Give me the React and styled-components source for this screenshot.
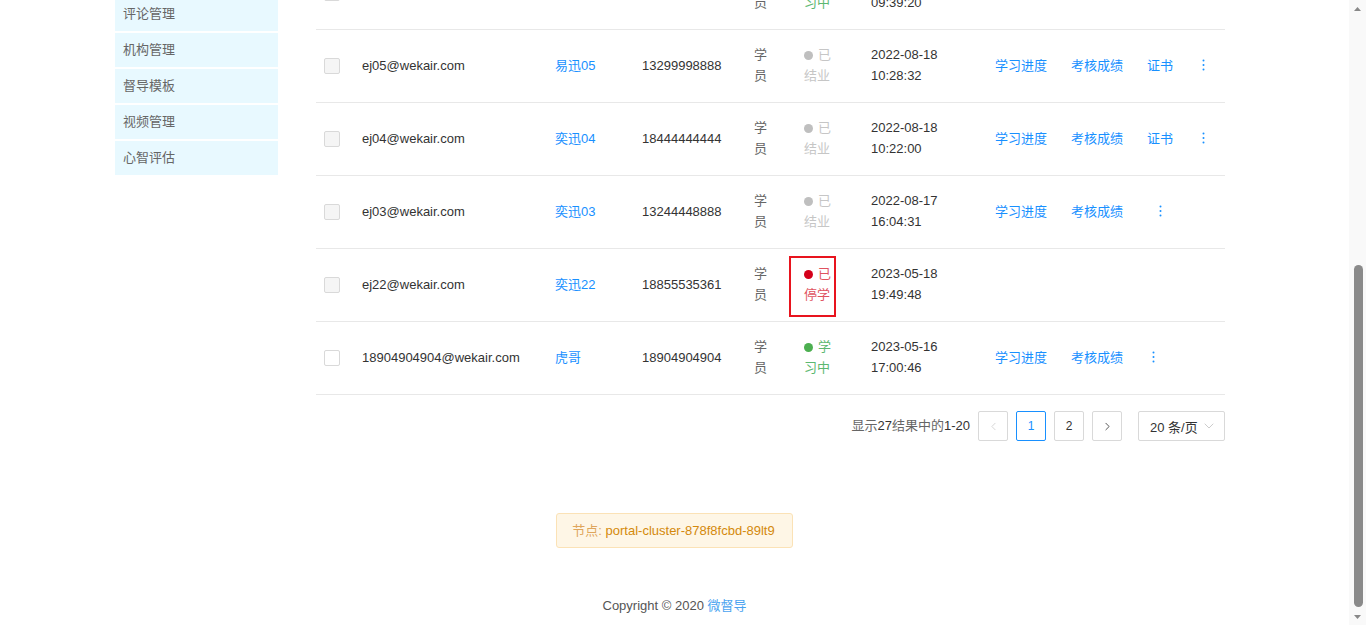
import { useLayoutEffect } from "react";
import styled, { createGlobalStyle } from "styled-components";
import { ChevronLeft, ChevronRight, ChevronDown } from "lucide-react";

const GlobalStyle = createGlobalStyle`
  html, body {
    margin: 0;
    padding: 0;
    background: #fff;
  }
  body {
    padding-right: 17px;
    font-family: "Liberation Sans", "Noto Sans CJK SC", sans-serif;
    font-size: 13px;
    color: #333;
  }
`;

// window scrollbar as it appears in the screenshot (page scrolled to bottom)
const ScrollTrack = styled.div`
  position: fixed;
  top: 0;
  right: 0;
  width: 17px;
  height: 100vh;
  background: #f9f9f9;
  display: flex;
  flex-direction: column;
`;

const ScrollArea = styled.div`
  flex: 1;
  display: flex;
  flex-direction: column;
  justify-content: flex-end;
  align-items: center;
  padding: 0 0 1px 1px;
`;

const ScrollThumb = styled.div`
  width: 9px;
  height: 342px;
  border-radius: 5px;
  background: #8a8a8a;
`;

const Header = styled.header`
  height: 60px;
  box-sizing: border-box;
  border-bottom: 1px solid #eee;
  display: flex;
  align-items: center;
  padding: 0 115px;
  gap: 32px;
`;

const Logo = styled.div`
  font-size: 20px;
  color: #1890ff;
`;

const Container = styled.div`
  width: 1119px;
  margin: 32px auto 0;
  display: flex;
  align-items: flex-start;
  gap: 38px;
`;

const Sidebar = styled.ul`
  width: 163px;
  flex: none;
  margin: 0;
  padding: 0;
  list-style: none;
`;

const SideItem = styled.li`
  height: 34px;
  line-height: 34px;
  margin-bottom: 2px;
  padding-left: 8px;
  background: ${(props) => (props.$active ? "#bae7ff" : "#e8f9ff")};
  color: #666;
  font-size: 13px;
`;

const Main = styled.main`
  width: 909px;
  flex: none;
`;

const Toolbar = styled.div`
  height: 120px;
  display: flex;
  flex-direction: column;
  gap: 20px;
  padding-top: 10px;
  box-sizing: border-box;
`;

const Title = styled.h2`
  margin: 0;
  font-size: 18px;
  font-weight: normal;
  color: #333;
`;

const SearchInput = styled.div`
  width: 240px;
  height: 30px;
  border: 1px solid #d9d9d9;
  border-radius: 2px;
  color: #bbb;
  line-height: 30px;
  padding-left: 10px;
`;

const Row = styled.div`
  display: grid;
  grid-template-columns: 46px 193px 87px 112px 50px 67px 124px 230px;
  align-items: center;
  height: ${(props) => (props.$head ? "54px" : "73px")};
  box-sizing: border-box;
  padding-bottom: 2px;
  border-bottom: 1px solid #e8e8e8;
  background: ${(props) => (props.$head ? "#fafafa" : "#fff")};
  color: ${(props) => (props.$head ? "#666" : "#333")};
  line-height: 21px;
`;

const CheckCell = styled.div`
  padding-left: 8px;
  padding-top: 1px;
`;

const Checkbox = styled.span`
  display: block;
  width: 16px;
  height: 16px;
  box-sizing: border-box;
  border: 1px solid #d9d9d9;
  border-radius: 2px;
  background: ${(props) => (props.$disabled ? "#f5f5f5" : "#fff")};
`;

const NameLink = styled.a`
  color: #1890ff;
  text-decoration: none;
`;

const Role = styled.div`
  width: 16px;
  color: #666;
`;

const statusColors = {
  done: { dot: "#bfbfbf", text: "#c6c6c6" },
  stopped: { dot: "#d4001a", text: "#e0535f" },
  learning: { dot: "#4caf50", text: "#5cb870" },
};

const Status = styled.div`
  position: relative;
  width: 32px;
  color: ${(props) => statusColors[props.$type].text};

  ${(props) =>
    props.$marked &&
    `
    &::after {
      content: "";
      position: absolute;
      top: -7px;
      bottom: -12px;
      left: -15px;
      right: 0;
      border: 2px solid #e8141e;
    }
  `}
`;

const Dot = styled.span`
  display: inline-block;
  width: 9px;
  height: 9px;
  border-radius: 50%;
  margin-right: 5px;
  vertical-align: -1px;
  background: ${(props) => statusColors[props.$type].dot};
`;

const Time = styled.div`
  display: flex;
  flex-direction: column;
`;

const Actions = styled.div`
  display: flex;
  align-items: center;
  gap: 24px;
`;

const ActionLink = styled.a`
  color: #1890ff;
  text-decoration: none;
`;

const More = styled.svg`
  margin-left: ${(props) => props.$shift}px;
  display: block;
`;

const Pager = styled.div`
  display: flex;
  justify-content: flex-end;
  align-items: center;
  margin-top: 16px;
  gap: 8px;
`;

const PagerInfo = styled.span`
  font-size: 13px;
  color: #666;
  margin-top: -4px;

  b {
    font-weight: normal;
    color: #333;
  }
`;

const PageBtn = styled.span`
  width: 30px;
  height: 30px;
  box-sizing: border-box;
  border: 1px solid ${(props) => (props.$active ? "#1890ff" : "#d9d9d9")};
  border-radius: 2px;
  display: flex;
  align-items: center;
  justify-content: center;
  font-size: 12px;
  color: ${(props) => (props.$active ? "#1890ff" : props.$muted ? "#ccc" : "#333")};
`;

const SizeSelect = styled.div`
  margin-left: 8px;
  width: 87px;
  height: 30px;
  box-sizing: border-box;
  border: 1px solid #d9d9d9;
  border-radius: 2px;
  display: flex;
  align-items: center;
  justify-content: space-between;
  padding: 0 7px 0 11px;
  font-size: 13px;
  color: #333;

  svg {
    color: #bfbfbf;
  }
`;

const Footer = styled.footer`
  display: flex;
  flex-direction: column;
  align-items: center;
  padding-bottom: 9px;
`;

const NodeBox = styled.div`
  margin-top: 72px;
  height: 35px;
  box-sizing: border-box;
  line-height: 33px;
  padding: 0 17px 0 15px;
  background: #fef6e6;
  border: 1px solid #fbe2b6;
  border-radius: 3px;
  color: #d4890c;

  span {
    color: #dfa65c;
  }
`;

const Copyright = styled.div`
  margin-top: 48px;
  line-height: 20px;
  color: #555;

  a {
    color: #4aa3f0;
    text-decoration: none;
  }
`;

const menu = [
  "首页",
  "学员管理",
  "课程管理",
  "班级管理",
  "考试管理",
  "证书管理",
  "题库管理",
  "资讯管理",
  "活动管理",
  "订单管理",
  "评论管理",
  "机构管理",
  "督导模板",
  "视频管理",
  "心智评估",
];

const students = [
  {
    email: "ej08@wekair.com",
    name: "易迅08",
    phone: "13211112222",
    status: "learning",
    label: "学习中",
    date: "2022-08-19",
    time: "09:45:13",
    disabled: true,
    actions: ["学习进度", "考核成绩"],
    shift: 12,
  },
  {
    email: "ej07@wekair.com",
    name: "易迅07",
    phone: "13288886666",
    status: "learning",
    label: "学习中",
    date: "2022-08-19",
    time: "09:41:02",
    disabled: true,
    actions: ["学习进度", "考核成绩"],
    shift: 12,
  },
  {
    email: "ej06@wekair.com",
    name: "易迅06",
    phone: "13277775555",
    status: "learning",
    label: "学习中",
    date: "2022-08-19",
    time: "09:39:20",
    disabled: true,
    actions: [],
  },
  {
    email: "ej05@wekair.com",
    name: "易迅05",
    phone: "13299998888",
    status: "done",
    label: "已结业",
    date: "2022-08-18",
    time: "10:28:32",
    disabled: true,
    actions: ["学习进度", "考核成绩", "证书"],
    shift: 5,
  },
  {
    email: "ej04@wekair.com",
    name: "奕迅04",
    phone: "18444444444",
    status: "done",
    label: "已结业",
    date: "2022-08-18",
    time: "10:22:00",
    disabled: true,
    actions: ["学习进度", "考核成绩", "证书"],
    shift: 5,
  },
  {
    email: "ej03@wekair.com",
    name: "奕迅03",
    phone: "13244448888",
    status: "done",
    label: "已结业",
    date: "2022-08-17",
    time: "16:04:31",
    disabled: true,
    actions: ["学习进度", "考核成绩"],
    shift: 12,
  },
  {
    email: "ej22@wekair.com",
    name: "奕迅22",
    phone: "18855535361",
    status: "stopped",
    label: "已停学",
    date: "2023-05-18",
    time: "19:49:48",
    disabled: true,
    marked: true,
    actions: [],
  },
  {
    email: "18904904904@wekair.com",
    name: "虎哥",
    phone: "18904904904",
    status: "learning",
    label: "学习中",
    date: "2023-05-16",
    time: "17:00:46",
    disabled: false,
    actions: ["学习进度", "考核成绩"],
    shift: 5,
  },
];

const MoreIcon = ({ shift }) => (
  <More $shift={shift} width="3" height="12" viewBox="0 0 3 12">
    <circle cx="1.5" cy="1.5" r="1" fill="#1890ff" />
    <circle cx="1.5" cy="6" r="1" fill="#1890ff" />
    <circle cx="1.5" cy="10.5" r="1" fill="#1890ff" />
  </More>
);

const ScrollArrow = ({ down }) => (
  <svg width="17" height="17" viewBox="0 0 17 17">
    <polygon
      points={down ? "5,7 12,7 8.5,11" : "5,11 12,11 8.5,7"}
      fill="#888"
    />
  </svg>
);

const StudentRow = ({ item }) => (
  <Row>
    <CheckCell>
      <Checkbox $disabled={item.disabled} />
    </CheckCell>
    <div>{item.email}</div>
    <div>
      <NameLink>{item.name}</NameLink>
    </div>
    <div>{item.phone}</div>
    <Role>学员</Role>
    <div>
      <Status $type={item.status} $marked={item.marked}>
        <Dot $type={item.status} />
        {item.label}
      </Status>
    </div>
    <Time>
      <span>{item.date}</span>
      <span>{item.time}</span>
    </Time>
    <Actions>
      {item.actions.map((action) => (
        <ActionLink key={action}>{action}</ActionLink>
      ))}
      {item.actions.length > 0 && <MoreIcon shift={item.shift} />}
    </Actions>
  </Row>
);

const App = () => {
  // the screenshot shows the page scrolled all the way down
  useLayoutEffect(() => {
    window.scrollTo(0, document.documentElement.scrollHeight);
  }, []);

  return (
    <>
      <GlobalStyle />
      <Header>
        <Logo>微督导</Logo>
      </Header>

      <Container>
        <Sidebar>
          {menu.map((item) => (
            <SideItem key={item} $active={item === "学员管理"}>
              {item}
            </SideItem>
          ))}
        </Sidebar>

        <Main>
          <Toolbar>
            <Title>学员列表</Title>
            <SearchInput>请输入账号或姓名</SearchInput>
          </Toolbar>

          <Row $head>
            <CheckCell>
              <Checkbox />
            </CheckCell>
            <div>账号</div>
            <div>姓名</div>
            <div>手机号</div>
            <div>角色</div>
            <div>状态</div>
            <div>创建时间</div>
            <div>操作</div>
          </Row>
          {students.map((item) => (
            <StudentRow key={item.email} item={item} />
          ))}

          <Pager>
            <PagerInfo>
              显示<b>27</b>结果中的<b>1-20</b>
            </PagerInfo>
            <PageBtn $muted>
              <ChevronLeft size={13} strokeWidth={1.5} />
            </PageBtn>
            <PageBtn $active>1</PageBtn>
            <PageBtn>2</PageBtn>
            <PageBtn>
              <ChevronRight size={13} strokeWidth={1.5} />
            </PageBtn>
            <SizeSelect>
              20 条/页
              <ChevronDown size={16} strokeWidth={1.2} />
            </SizeSelect>
          </Pager>
        </Main>
      </Container>

      <Footer>
        <NodeBox>
          <span>节点: </span>portal-cluster-878f8fcbd-89lt9
        </NodeBox>
        <Copyright>
          Copyright © 2020 <a>微督导</a>
        </Copyright>
      </Footer>

      <ScrollTrack>
        <ScrollArrow />
        <ScrollArea>
          <ScrollThumb />
        </ScrollArea>
        <ScrollArrow down />
      </ScrollTrack>
    </>
  );
};

export default App;
